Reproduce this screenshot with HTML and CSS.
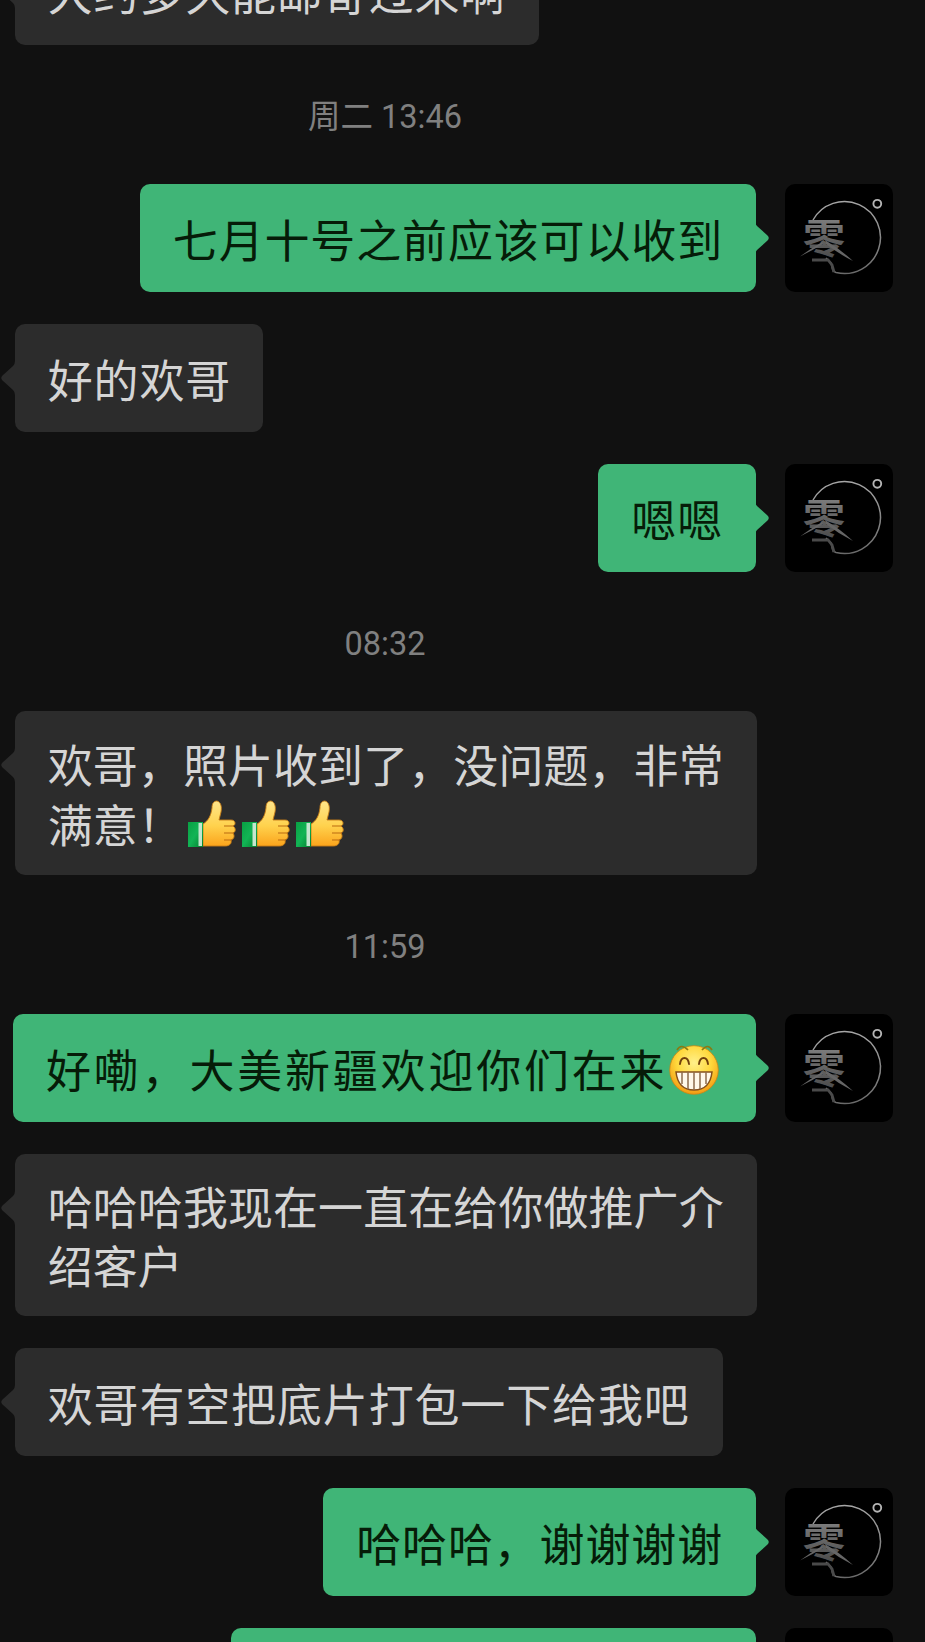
FILE: index.html
```html
<!DOCTYPE html>
<html lang="zh-CN">
<head>
<meta charset="utf-8">
<title>聊天</title>
<link rel="stylesheet" href="styles.css">
</head>
<body>
<svg class="defs" aria-hidden="true">
  <defs>
    <linearGradient id="steel" x1="0" y1="0" x2="0" y2="1">
      <stop offset="0" stop-color="#8c8c8c"/><stop offset=".5" stop-color="#666"/><stop offset="1" stop-color="#444"/>
    </linearGradient>
    <linearGradient id="ring" x1="0" y1="0" x2="0" y2="1">
      <stop offset="0" stop-color="#a6a6a6"/><stop offset="1" stop-color="#6a6a6a"/>
    </linearGradient>
    <linearGradient id="skin" x1="0" y1="0" x2="0" y2="1">
      <stop offset="0" stop-color="#ffe58a"/><stop offset=".55" stop-color="#ffd24d"/><stop offset="1" stop-color="#fba41c"/>
    </linearGradient>
    <linearGradient id="cuff" x1="0" y1="0" x2="1" y2="1">
      <stop offset="0" stop-color="#08a043"/><stop offset=".5" stop-color="#12b455"/><stop offset="1" stop-color="#04802f"/>
    </linearGradient>
    <radialGradient id="face" cx=".5" cy=".35" r=".65">
      <stop offset="0" stop-color="#fff08a"/><stop offset=".55" stop-color="#ffd83c"/><stop offset="1" stop-color="#f39a12"/>
    </radialGradient>
    <symbol id="avatar" viewBox="0 0 108 108">
      <path d="M28 36A36 36 0 1 1 51 88.500L48 87L46 79L41 74" fill="none" stroke="url(#ring)" stroke-width="1.500"/>
      <circle cx="92.300" cy="19.800" r="3.900" fill="none" stroke="#b4b4b4" stroke-width="1.900"/>
      <text class="mark" x="18" y="69" textLength="42" lengthAdjust="spacingAndGlyphs" fill="url(#steel)">零</text>
      <path d="M37 58Q25 65 15 72.500Q28 66 38 60ZM40 56Q55 65 68 77Q54 70 41 60Z" fill="#666"/>
      <path d="M27 76H43L47 81L49 88" fill="none" stroke="#4a4a4a" stroke-width="2.800"/>
    </symbol>
    <symbol id="thumb" viewBox="0 0 48 48">
      <path d="M15 24C20 21 23 16 24 8C24 3 26 1 29 1C33 2 34 7 33 12L31 20H43C48 20 48 25 45 26C48 28 48 32 45 33C47 36 46 39 43 40C44 44 41 46 37 46H15Z" fill="url(#skin)" stroke="#c77d16" stroke-width=".9"/>
      <path d="M36 26H46M36 33H46M36 40H44" fill="none" stroke="#b96b10" stroke-width="1.100"/>
      <path d="M0 22H15V47H0Z" fill="url(#cuff)"/>
      <path d="M10.500 23H14V46H10.500Z" fill="#c4e6cf"/>
    </symbol>
    <symbol id="grin" viewBox="0 0 52 54">
      <circle cx="26" cy="29" r="24.300" fill="url(#face)" stroke="#c98714" stroke-width=".8"/>
      <path d="M9 9Q13 2 20 9M34 9Q40 2 44 9" fill="none" stroke="#8a7a12" stroke-width="1.700"/>
      <path d="M12 23C13 15 20 15 21 23M31 23C32 15 39 15 40 23" fill="none" stroke="#71400c" stroke-width="1.900" stroke-linecap="round"/>
      <path d="M8 31H44Q42 49 26 49Q10 49 8 31Z" fill="#fff8e9" stroke="#87501b" stroke-width="1.500"/>
      <path d="M14 31V43M20 31V48M26 31V49M32 31V48M38 31V43" stroke="#8d6b4c" stroke-width="1.500"/>
    </symbol>
    <symbol id="tip" viewBox="0 0 14 34"><path d="M0 0Q0 3 2 5L12.500 14.500Q15 17 12.500 19.500L2 29Q0 31 0 34Z" fill="currentColor"/></symbol>
  </defs>
</svg>
<main class="chat">
  <div class="row"><div class="bubble theirs"><svg class="tip"><use href="#tip"/></svg>大约多久能邮寄过来啊</div></div>
  <time class="time">周二 13:46</time>
  <div class="row mine-row"><div class="bubble mine">七月十号之前应该可以收到<svg class="tip"><use href="#tip"/></svg></div><svg class="avatar"><use href="#avatar"/></svg></div>
  <div class="row"><div class="bubble theirs short"><svg class="tip"><use href="#tip"/></svg>好的欢哥</div></div>
  <div class="row mine-row"><div class="bubble mine">嗯嗯<svg class="tip"><use href="#tip"/></svg></div><svg class="avatar"><use href="#avatar"/></svg></div>
  <time class="time">08:32</time>
  <div class="row"><div class="bubble theirs multi with-emoji"><svg class="tip"><use href="#tip"/></svg>欢哥，照片收到了，没问题，非常<br>满意！<span class="thumbs"><svg class="thumb"><use href="#thumb"/></svg><svg class="thumb"><use href="#thumb"/></svg><svg class="thumb"><use href="#thumb"/></svg></span></div></div>
  <time class="time">11:59</time>
  <div class="row mine-row"><div class="bubble mine wide">好嘞，大美新疆欢迎你们在来<svg class="grin"><use href="#grin"/></svg><svg class="tip"><use href="#tip"/></svg></div><svg class="avatar"><use href="#avatar"/></svg></div>
  <div class="row"><div class="bubble theirs multi"><svg class="tip"><use href="#tip"/></svg>哈哈哈我现在一直在给你做推广介<br>绍客户</div></div>
  <div class="row"><div class="bubble theirs"><svg class="tip"><use href="#tip"/></svg>欢哥有空把底片打包一下给我吧</div></div>
  <div class="row mine-row"><div class="bubble mine">哈哈哈，谢谢谢谢<svg class="tip"><use href="#tip"/></svg></div><svg class="avatar"><use href="#avatar"/></svg></div>
  <div class="row mine-row"><div class="bubble mine partial"></div><svg class="avatar"><use href="#avatar"/></svg></div>
</main>
</body>
</html>
```
FILE: styles.css
```css
* { box-sizing: border-box; }
html, body { margin: 0; height: 1642px; overflow: hidden; background: #111; }
body { font-family: "Noto Sans CJK SC", sans-serif; }
.defs { display: block; width: 0; height: 0; }
.chat { display: flex; flex-direction: column; gap: 32px; width: 925px; height: 1705px; margin-top: -63px; overflow: hidden; }
.row { display: flex; flex: none; padding-left: 15px; }
.mine-row { justify-content: flex-end; gap: 29px; padding: 0 32px 0 0; }
.bubble {
  position: relative; flex: none; min-height: 108px; padding: 25px 33px 23px;
  border-radius: 10px; font-size: 45px; line-height: 60px; letter-spacing: .85px; white-space: nowrap;
}
.theirs { background: #2c2c2c; color: #d5d5d5; padding-left: 32.7px; }
.mine { background: #40b577; color: #061c08; }
.tip { position: absolute; top: 37px; width: 14px; height: 34px; }
.theirs .tip { left: -14px; color: #2c2c2c; transform: scaleX(-1); }
.mine .tip { right: -13px; color: #40b577; }
.avatar { flex: none; width: 108px; height: 108px; background: #000; border-radius: 10px; }
.mark { font-family: "Noto Sans CJK SC", sans-serif; font-size: 40px; font-weight: 700; }
.time {
  align-self: flex-start; width: 770px; height: 75px; flex: none; padding-top: 18px;
  font-family: Roboto, "Noto Sans CJK SC", sans-serif; font-size: 32.5px; line-height: 44px;
  color: #808080; text-align: center;
}
.short { padding-right: 31.5px; }
.multi { width: 742px; height: 162px; padding-top: 22px; line-height: 59px; letter-spacing: .07px; }
.with-emoji { height: 164px; line-height: 60px; padding-top: 23px; }
.thumbs { display: inline-flex; gap: 6px; margin-left: 5.5px; vertical-align: -5px; }
.thumb { width: 48px; height: 48px; }
.wide { width: 743px; letter-spacing: 2.8px; }
.grin { width: 52px; height: 54px; margin-left: 1px; vertical-align: -7px; }
.partial { width: 525px; }
```
